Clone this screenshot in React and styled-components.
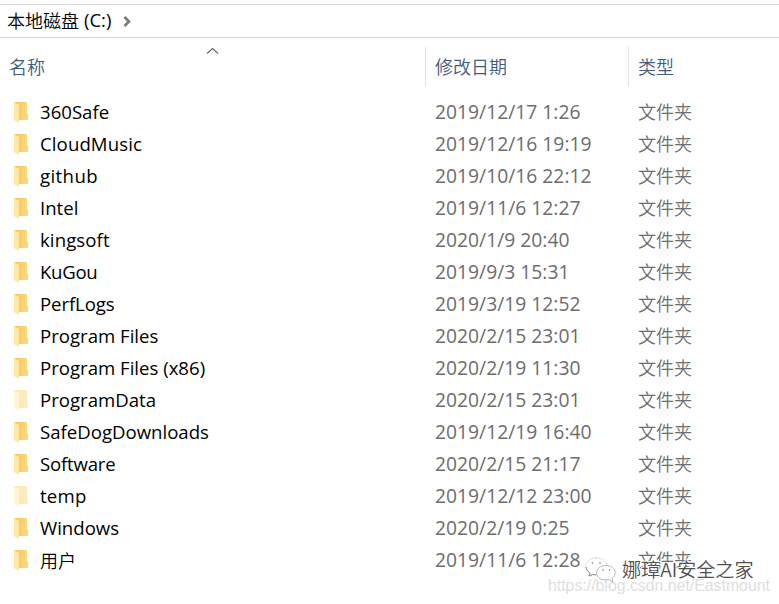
import React from "react";
import styled, { createGlobalStyle } from "styled-components";

const Global = createGlobalStyle`
  * { box-sizing: border-box; }
  body { margin: 0; background: #fff; overflow: hidden; }
`;

const latin = `"Open Sans", "Noto Sans", "Noto Sans CJK SC", sans-serif`;
const cjk = `"Noto Sans CJK SC DemiLight", "Noto Sans CJK SC", sans-serif`;

const Window = styled.main`
  position: relative;
  width: 779px;
  height: 604px;
  padding-top: 4px;
  overflow: hidden;
  background: #fff;
  color: #000;
`;

const AddressBar = styled.nav`
  display: flex;
  align-items: center;
  height: 34px;
  padding: 0 0 2px 7px;
  border-top: 1px solid #d9d9d9;
  border-bottom: 1px solid #d9d9d9;
  font: 350 18px/30px ${cjk};
  white-space: pre;
`;

const Drive = styled.span`
  margin-left: 5px;
  font: 400 18.5px/30px ${latin};
`;

const Chevron = styled.svg`
  margin: 3px 0 0 12px;
`;

const columns = "425px 203px 1fr";

const Header = styled.header`
  position: relative;
  display: grid;
  grid-template-columns: ${columns};
  height: 40px;
  margin-top: 9px;
`;

const HeaderCell = styled.div`
  height: 40px;
  padding-left: 9px;
  border-left: ${(p) => (p.$divided ? "1px solid #e2e2e2" : "none")};
  color: #435b7c;
  font: 350 18px/39px ${cjk};
`;

const SortArrow = styled.svg`
  position: absolute;
  left: 206px;
  top: 0;
`;

const List = styled.ul`
  list-style: none;
  margin: 9px 0 0;
  padding: 0;
`;

const Row = styled.li`
  display: grid;
  grid-template-columns: ${columns};
  height: 32px;
  white-space: nowrap;
`;

const NameCell = styled.div`
  display: flex;
  align-items: center;
  height: 32px;
  padding-left: 14px;
`;

const FolderIcon = styled.svg`
  flex: none;
  margin-right: 12px;
  opacity: ${(p) => (p.$hidden ? 0.45 : 1)};
`;

const Name = styled.span`
  font: ${(p) => (p.$cjk ? `350 18px/32px ${cjk}` : `400 18.6px/32px ${latin}`)};
  letter-spacing: ${(p) => p.$spacing || 0}px;
`;

const DateCell = styled.div`
  padding-left: 10px;
  color: #6d6d6d;
  font: 400 19.3px/32px ${latin};
`;

const TypeCell = styled.div`
  padding-left: 10px;
  color: #6d6d6d;
  font: 350 18px/30px ${cjk};
`;

const AccountMark = styled.div`
  position: absolute;
  left: 585px;
  top: 556px;
  display: flex;
  align-items: center;
  height: 28px;
  color: #505050;
  font: 300 19.1px/28px ${cjk};
  text-shadow: -1px -1px 0 #fff, 1px -1px 0 #fff;
  white-space: nowrap;
`;

const AccountName = styled.span`
  margin: -2px 0 0 5px;
`;

const BlogUrl = styled.div`
  position: absolute;
  left: 548px;
  top: 577px;
  color: #dedede;
  font: 400 15.85px/18px "Liberation Sans", sans-serif;
  white-space: nowrap;
`;

const rows = [
  { name: "360Safe", date: "2019/12/17 1:26" },
  { name: "CloudMusic", date: "2019/12/16 19:19", spacing: 0.1 },
  { name: "github", date: "2019/10/16 22:12", spacing: 0.4 },
  { name: "Intel", date: "2019/11/6 12:27" },
  { name: "kingsoft", date: "2020/1/9 20:40", spacing: 0.1 },
  { name: "KuGou", date: "2019/9/3 15:31", spacing: -0.3 },
  { name: "PerfLogs", date: "2019/3/19 12:52", spacing: -0.1 },
  { name: "Program Files", date: "2020/2/15 23:01" },
  { name: "Program Files (x86)", date: "2020/2/19 11:30" },
  { name: "ProgramData", date: "2020/2/15 23:01", hidden: true },
  { name: "SafeDogDownloads", date: "2019/12/19 16:40" },
  { name: "Software", date: "2020/2/15 21:17", spacing: -0.2 },
  { name: "temp", date: "2019/12/12 23:00", hidden: true, spacing: 0.2 },
  { name: "Windows", date: "2020/2/19 0:25" },
  { name: "用户", date: "2019/11/6 12:28", cjk: true },
];

function Folder({ hidden }) {
  return (
    <FolderIcon $hidden={hidden} width="14" height="22" viewBox="0 0 14 22">
      <defs>
        <linearGradient id="back" x1="0" x2="1">
          <stop offset="0" stopColor="#efc75a" />
          <stop offset="1" stopColor="#fadb80" />
        </linearGradient>
      </defs>
      <path d="M0 1H13V12L14 13V19H4L0 17Z" fill="url(#back)" />
      <path d="M0 1L5 4V22L0 19Z" fill="#ffe8a2" />
    </FolderIcon>
  );
}

function ChatLogo() {
  return (
    <svg width="32" height="28" viewBox="0 0 32 28" fill="#fff" stroke="#a5a5a5" strokeWidth="0.8">
      <path d="M11 2C5 2 1 6 1 10.500C1 13 2.500 15.500 5 17L4 20L8 18.500C15 20 22 16 22 10C22 5 17 2 11 2Z" strokeDasharray="1 1.500" />
      <path d="M21 9.500C15 9.500 11.500 13 11.500 17C11.500 22 17 25 24 23.500L28 26L27 22.500C33 18 30 9.500 21 9.500Z" />
      <path d="M1 11C1 13 2.500 15.500 5 17L4 20L8 18.500L11 19" stroke="#777" fill="none" />
      <g fill="#777" stroke="none">
        <circle cx="7.500" cy="7" r="0.800" />
        <circle cx="15" cy="7" r="0.800" />
        <circle cx="18" cy="14" r="0.800" />
        <circle cx="24.500" cy="14" r="0.800" />
      </g>
    </svg>
  );
}

export default function App() {
  return (
    <Window>
      <Global />
      <AddressBar>
        本地磁盘<Drive>(C:)</Drive>
        <Chevron width="9" height="11" viewBox="0 0 9 11" fill="none" stroke="#777" strokeWidth="2.500">
          <path d="M1.500 1L6 5.500L1.500 10" />
        </Chevron>
      </AddressBar>
      <Header>
        <HeaderCell>名称</HeaderCell>
        <HeaderCell $divided>修改日期</HeaderCell>
        <HeaderCell $divided>类型</HeaderCell>
        <SortArrow width="13" height="8" viewBox="0 0 13 8" fill="none" stroke="#666" strokeWidth="1.100">
          <path d="M1 6.500L6.500 1.500L12 6.500" />
        </SortArrow>
      </Header>
      <List>
        {rows.map((r) => (
          <Row key={r.name}>
            <NameCell>
              <Folder hidden={r.hidden} />
              <Name $cjk={r.cjk} $spacing={r.spacing}>{r.name}</Name>
            </NameCell>
            <DateCell>{r.date}</DateCell>
            <TypeCell>文件夹</TypeCell>
          </Row>
        ))}
      </List>
      <BlogUrl>https://blog.csdn.net/Eastmount</BlogUrl>
      <AccountMark>
        <ChatLogo />
        <AccountName>娜璋AI安全之家</AccountName>
      </AccountMark>
    </Window>
  );
}
